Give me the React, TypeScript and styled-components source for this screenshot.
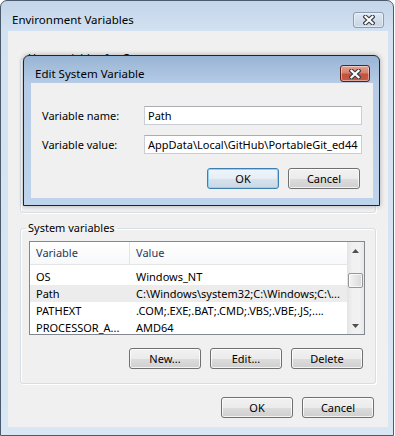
import styled, { createGlobalStyle } from "styled-components";

const GlobalStyle = createGlobalStyle`
  body {
    margin: 0;
    background: #ffffff;
    font-family: "Noto Sans", "Liberation Sans", sans-serif;
    font-size: 11px;
    color: #000;
  }
`;

const systemRows = [
  { name: "OS", value: "Windows_NT" },
  { name: "Path", value: "C:\\Windows\\system32;C:\\Windows;C:\\...", selected: true },
  { name: "PATHEXT", value: ".COM;.EXE;.BAT;.CMD;.VBS;.VBE;.JS;...." },
  { name: "PROCESSOR_A...", value: "AMD64" },
];

function CloseGlyph() {
  return (
    <svg width="12" height="10" viewBox="0 0 12 10">
      <path d="M2.5 1.8 L9.5 8.2 M9.5 1.8 L2.5 8.2" stroke="#3a3f47" strokeWidth="4.4" strokeLinecap="square" />
      <path d="M2.5 1.8 L9.5 8.2 M9.5 1.8 L2.5 8.2" stroke="#ffffff" strokeWidth="2.2" strokeLinecap="square" />
    </svg>
  );
}

function Arrow({ down }: { down?: boolean }) {
  return (
    <svg width="7" height="4" viewBox="0 0 7 4">
      <polygon points={down ? "0,0 7,0 3.5,4" : "0,4 7,4 3.5,0"} fill="#505050" />
    </svg>
  );
}

export default function App() {
  return (
    <>
      <GlobalStyle />
      <Window>
        <TitleBar>
          <TitleText>Environment Variables</TitleText>
          <CloseButton>
            <CloseGlyph />
          </CloseButton>
        </TitleBar>
        <Client>
          <Group $height={163} $top={19}>
            <Legend>User variables for Gary</Legend>
          </Group>
          <Group $top={7}>
            <Legend>System variables</Legend>
            <ListView>
              <ListBody>
                <HeaderRow>
                  <HeaderCell $first>Variable</HeaderCell>
                  <HeaderCell>Value</HeaderCell>
                </HeaderRow>
                <Rows>
                  {systemRows.map((r) => (
                    <Row key={r.name} $selected={r.selected}>
                      <Cell>{r.name}</Cell>
                      <Cell>{r.value}</Cell>
                    </Row>
                  ))}
                </Rows>
              </ListBody>
              <ScrollBar>
                <ScrollArrow>
                  <Arrow />
                </ScrollArrow>
                <Track>
                  <Thumb />
                </Track>
                <ScrollArrow>
                  <Arrow down />
                </ScrollArrow>
              </ScrollBar>
            </ListView>
            <ButtonRow $top={13} $right={2}>
              <Button>New...</Button>
              <Button>Edit...</Button>
              <Button>Delete</Button>
            </ButtonRow>
          </Group>
          <ButtonRow $top={13} $right={2}>
            <Button>OK</Button>
            <Button>Cancel</Button>
          </ButtonRow>
        </Client>

        <Dialog>
          <DialogTitleBar>
            <TitleText>Edit System Variable</TitleText>
            <CloseButton $active>
              <CloseGlyph />
            </CloseButton>
          </DialogTitleBar>
          <DialogClient>
            <Form>
              <FieldLabel>Variable name:</FieldLabel>
              <TextBox readOnly value="Path" />
              <FieldLabel>Variable value:</FieldLabel>
              <TextBox
                readOnly
                value="AppData\Local\GitHub\PortableGit_ed44d00daa128db527396557813e7b68709ed0e2\cmd;C:\Program Files\Git\bin"
              />
            </Form>
            <ButtonRow $top={14} $right={2}>
              <Button $default>OK</Button>
              <Button>Cancel</Button>
            </ButtonRow>
          </DialogClient>
        </Dialog>
      </Window>
    </>
  );
}

const Window = styled.div`
  position: relative;
  box-sizing: border-box;
  width: 394px;
  height: 436px;
  border: 1px solid #4b5a6c;
  border-radius: 7px 7px 0 0;
  background: linear-gradient(#c4d5e9 0px, #d3e1f1 30px, #d9e6f4 100%);
  padding: 0 5px 8px 7px;
  display: flex;
  flex-direction: column;
`;

const TitleBar = styled.div`
  height: 30px;
  box-sizing: border-box;
  padding: 8px 4px 0 4px;
  display: flex;
  align-items: center;
  justify-content: space-between;
`;

const TitleText = styled.span`
  font-size: 11.5px;
  color: #000;
  line-height: 16px;
`;

const CloseButton = styled.div<{ $active?: boolean }>`
  width: ${(p) => (p.$active ? 30 : 31)}px;
  height: ${(p) => (p.$active ? 17 : 16)}px;
  box-sizing: border-box;
  border-radius: 3px;
  display: flex;
  align-items: center;
  justify-content: center;
  border: 1px solid ${(p) => (p.$active ? "#5a2118" : "#8a9db5")};
  background: ${(p) =>
    p.$active
      ? "linear-gradient(#e4a294 0%, #d7806e 45%, #c4513e 55%, #c65a44 100%)"
      : "linear-gradient(#dfe8f3 0%, #d2deec 50%, #c7d5e6 100%)"};
  box-shadow: inset 0 0 0 1px rgba(255, 255, 255, 0.45);
`;

const Client = styled.div`
  flex: 1;
  background: #f0f0f0;
  padding: 0 12px;
  display: flex;
  flex-direction: column;
`;

const Group = styled.fieldset<{ $height?: number; $top: number }>`
  margin: ${(p) => p.$top}px 0 0 0;
  ${(p) => (p.$height ? `height: ${p.$height}px;` : "")}
  box-sizing: border-box;
  border: 1px solid #d5dfe5;
  border-radius: 3px;
  padding: 0 10px 14px 8px;
  min-width: 0;
  box-shadow: inset 1px 1px 0 #ffffff, 1px 1px 0 #ffffff;
`;

const Legend = styled.legend`
  font-size: 11px;
  line-height: 16px;
  padding: 0 2px;
  margin-left: -3px;
`;

const ListView = styled.div`
  margin-top: 5px;
  height: 94px;
  box-sizing: border-box;
  border: 1px solid #828790;
  background: #fff;
  display: flex;
`;

const ListBody = styled.div`
  flex: 1;
  min-width: 0;
  display: flex;
  flex-direction: column;
`;

const HeaderRow = styled.div`
  height: 23px;
  box-sizing: border-box;
  display: grid;
  grid-template-columns: 100px 1fr;
  border-bottom: 1px solid #e5e5e5;
  background: linear-gradient(#ffffff, #f7f8fa);
`;

const HeaderCell = styled.div<{ $first?: boolean }>`
  padding-left: 6px;
  line-height: 22px;
  color: #1e395b;
  ${(p) => (p.$first ? "border-right: 1px solid #e5e5e5;" : "")}
`;

const Rows = styled.div`
  padding-top: 3px;
`;

const Row = styled.div<{ $selected?: boolean }>`
  height: 17px;
  display: grid;
  grid-template-columns: 100px 1fr;
  background: ${(p) => (p.$selected ? "#ececec" : "transparent")};
`;

const Cell = styled.div`
  padding-left: 6px;
  line-height: 17px;
  white-space: nowrap;
  overflow: hidden;
`;

const ScrollBar = styled.div`
  width: 17px;
  display: flex;
  flex-direction: column;
  background: linear-gradient(90deg, #e3e3e3, #f0f0f0 30%, #f2f2f2 70%, #e8e8e8);
`;

const ScrollArrow = styled.div`
  height: 17px;
  display: flex;
  align-items: center;
  justify-content: center;
`;

const Track = styled.div`
  flex: 1;
  padding: 14px 1px 0;
`;

const Thumb = styled.div`
  height: 15px;
  box-sizing: border-box;
  border: 1px solid #979797;
  border-radius: 2px;
  background: linear-gradient(90deg, #f4f4f4, #e6e6e6 50%, #d9d9d9);
  box-shadow: inset 0 0 0 1px rgba(255, 255, 255, 0.7);
`;

const ButtonRow = styled.div<{ $top: number; $right: number }>`
  margin-top: ${(p) => p.$top}px;
  padding-right: ${(p) => p.$right}px;
  display: flex;
  justify-content: flex-end;
  gap: 9px;
`;

const Button = styled.div<{ $default?: boolean }>`
  width: 72px;
  height: 21px;
  box-sizing: border-box;
  border: 1px solid ${(p) => (p.$default ? "#3c7fb1" : "#707070")};
  border-radius: 3px;
  background: ${(p) =>
    p.$default
      ? "linear-gradient(#f0f6fa 0%, #e6eef5 50%, #d7e3ed 50%, #cbd9e5 100%)"
      : "linear-gradient(#f2f2f2 0%, #ebebeb 50%, #dddddd 50%, #cfcfcf 100%)"};
  box-shadow: inset 0 0 0 1px ${(p) => (p.$default ? "#93d2f4" : "rgba(255,255,255,0.75)")};
  display: flex;
  align-items: center;
  justify-content: center;
  font-size: 11px;
  line-height: 16px;
`;

const Dialog = styled.div`
  position: absolute;
  left: 22px;
  top: 54px;
  width: 357px;
  height: 151px;
  box-sizing: border-box;
  border: 1px solid #1c2530;
  border-radius: 6px 6px 0 0;
  background: linear-gradient(#98b4d4 0px, #b5cbe6 27px, #bed4ec 100%);
  box-shadow: 0 0 5px rgba(0, 0, 0, 0.3);
  padding: 0 6px 7px 7px;
  display: flex;
  flex-direction: column;
`;

const DialogTitleBar = styled.div`
  height: 27px;
  box-sizing: border-box;
  padding: 8px 3px 0 4px;
  display: flex;
  align-items: center;
  justify-content: space-between;
`;

const DialogClient = styled.div`
  flex: 1;
  background: #f0f0f0;
  padding: 23px 11px 0;
`;

const Form = styled.div`
  display: grid;
  grid-template-columns: 102px 1fr;
  row-gap: 10px;
  align-items: center;
`;

const FieldLabel = styled.label`
  font-size: 11px;
`;

const TextBox = styled.input`
  height: 19px;
  box-sizing: border-box;
  width: 100%;
  border: 1px solid #c9ced6;
  border-top-color: #abadb3;
  padding: 0 3px;
  font-family: "Noto Sans", "Liberation Sans", sans-serif;
  font-size: 11px;
  color: #000;
  background: #fff;
  outline: none;
`;
